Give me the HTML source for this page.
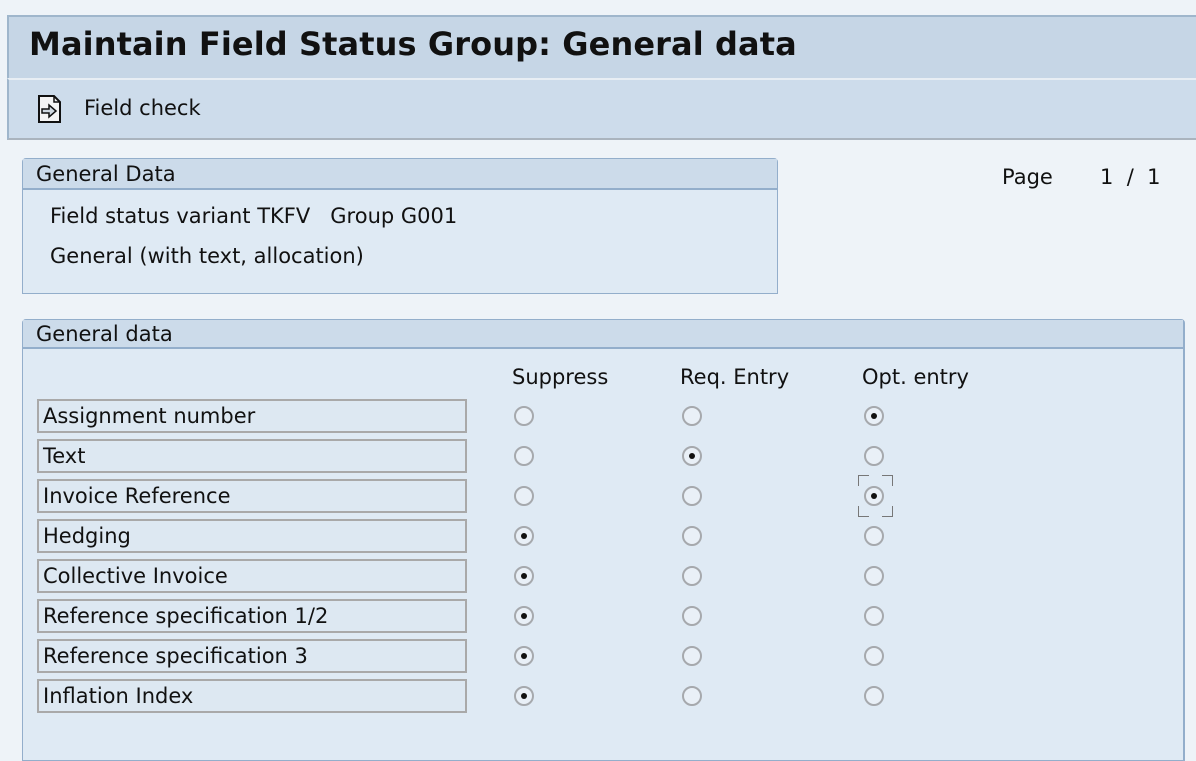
<!DOCTYPE html>
<html><head><style>
body{margin:0;width:1196px;height:754px;background:#eef3f8;font-family:"DejaVu Sans","Liberation Sans",sans-serif;color:#111;position:relative;overflow:hidden}
.a{position:absolute}
.t{white-space:nowrap;font-size:21px}
.lbl{position:absolute;left:37px;width:426px;height:30px;border:2px solid #a9a9a9;background:#dde8f2;box-sizing:content-box}
.lbl span{position:absolute;left:4px;top:3px;font-size:21px;white-space:nowrap}
.r{position:absolute;width:20px;height:20px;border:2px solid #a6a9ad;border-radius:50%;background:#e9f0f7;box-sizing:border-box}
.r.on::after{content:"";position:absolute;left:5px;top:5px;width:6px;height:6px;border-radius:50%;background:#111}
.c{position:absolute;width:10px;height:10px;border-color:#777;border-style:solid;border-width:0}
</style></head><body>
<div class="a" style="left:7px;top:15px;width:1189px;height:62px;background:#c6d6e6;border-top:2px solid #9fb6cc;border-left:2px solid #9fb6cc"></div>
<div class="a" style="left:29px;top:25px;font-size:32px;font-weight:bold;white-space:nowrap;letter-spacing:0.1px">Maintain Field Status Group: General data</div>
<div class="a" style="left:7px;top:78px;width:1189px;height:58px;background:#cddceb;border-left:2px solid #9fb6cc;border-bottom:2px solid #aab4be;border-top:2px solid #e8eef4"></div>
<svg class="a" style="left:37px;top:95px" width="26" height="28" viewBox="0 0 26 28"><path d="M2 1h15l6 6v20H2z" fill="#f4f4f4" stroke="#111" stroke-width="2"/><path d="M17 1v6h6" fill="none" stroke="#111" stroke-width="1.5"/><path d="M5 14h7v-4l7 6-7 6v-4H5z" fill="#cfd8e0" stroke="#111" stroke-width="1.5"/></svg>
<div class="a t" style="left:84px;top:96px">Field check</div>

<div class="a" style="left:22px;top:158px;width:754px;height:134px;border:1px solid #93aecb;background:#dfeaf4;border-radius:4px 4px 0 0"></div>
<div class="a" style="left:23px;top:159px;width:754px;height:29px;background:#ccdbea;border-bottom:2px solid #93aecb"></div>
<div class="a t" style="left:36px;top:162px">General Data</div>
<div class="a t" style="left:50px;top:204px">Field status variant TKFV&nbsp;&nbsp;&nbsp;Group G001</div>
<div class="a t" style="left:50px;top:244px">General (with text, allocation)</div>
<div class="a t" style="left:1002px;top:165px">Page</div>
<div class="a t" style="left:1100px;top:165px">1&nbsp;&nbsp;/&nbsp;&nbsp;1</div>

<div class="a" style="left:22px;top:319px;width:1160px;height:440px;border:1px solid #93aecb;border-right:2px solid #93aecb;background:#dfeaf4;border-radius:4px 4px 0 0"></div>
<div class="a" style="left:23px;top:320px;width:1160px;height:27px;background:#ccdbea;border-bottom:2px solid #93aecb"></div>
<div class="a t" style="left:36px;top:322px">General data</div>
<div class="a t" style="left:512px;top:365px">Suppress</div>
<div class="a t" style="left:680px;top:365px">Req. Entry</div>
<div class="a t" style="left:862px;top:365px">Opt. entry</div>

<div class="lbl" style="top:399px"><span>Assignment number</span></div>
<div class="lbl" style="top:439px"><span>Text</span></div>
<div class="lbl" style="top:479px"><span>Invoice Reference</span></div>
<div class="lbl" style="top:519px"><span>Hedging</span></div>
<div class="lbl" style="top:559px"><span>Collective Invoice</span></div>
<div class="lbl" style="top:599px"><span>Reference specification 1/2</span></div>
<div class="lbl" style="top:639px"><span>Reference specification 3</span></div>
<div class="lbl" style="top:679px"><span>Inflation Index</span></div>

<div class="r" style="left:514px;top:406px"></div><div class="r" style="left:682px;top:406px"></div><div class="r on" style="left:864px;top:406px"></div>
<div class="r" style="left:514px;top:446px"></div><div class="r on" style="left:682px;top:446px"></div><div class="r" style="left:864px;top:446px"></div>
<div class="r" style="left:514px;top:486px"></div><div class="r" style="left:682px;top:486px"></div><div class="r on" style="left:864px;top:486px"></div>
<div class="c" style="left:858px;top:475px;border-top-width:1px;border-left-width:1px"></div>
<div class="c" style="left:882px;top:475px;border-top-width:1px;border-right-width:1px"></div>
<div class="c" style="left:858px;top:506px;border-bottom-width:1px;border-left-width:1px"></div>
<div class="c" style="left:882px;top:506px;border-bottom-width:1px;border-right-width:1px"></div>
<div class="r on" style="left:514px;top:526px"></div><div class="r" style="left:682px;top:526px"></div><div class="r" style="left:864px;top:526px"></div>
<div class="r on" style="left:514px;top:566px"></div><div class="r" style="left:682px;top:566px"></div><div class="r" style="left:864px;top:566px"></div>
<div class="r on" style="left:514px;top:606px"></div><div class="r" style="left:682px;top:606px"></div><div class="r" style="left:864px;top:606px"></div>
<div class="r on" style="left:514px;top:646px"></div><div class="r" style="left:682px;top:646px"></div><div class="r" style="left:864px;top:646px"></div>
<div class="r on" style="left:514px;top:686px"></div><div class="r" style="left:682px;top:686px"></div><div class="r" style="left:864px;top:686px"></div>
</body></html>
